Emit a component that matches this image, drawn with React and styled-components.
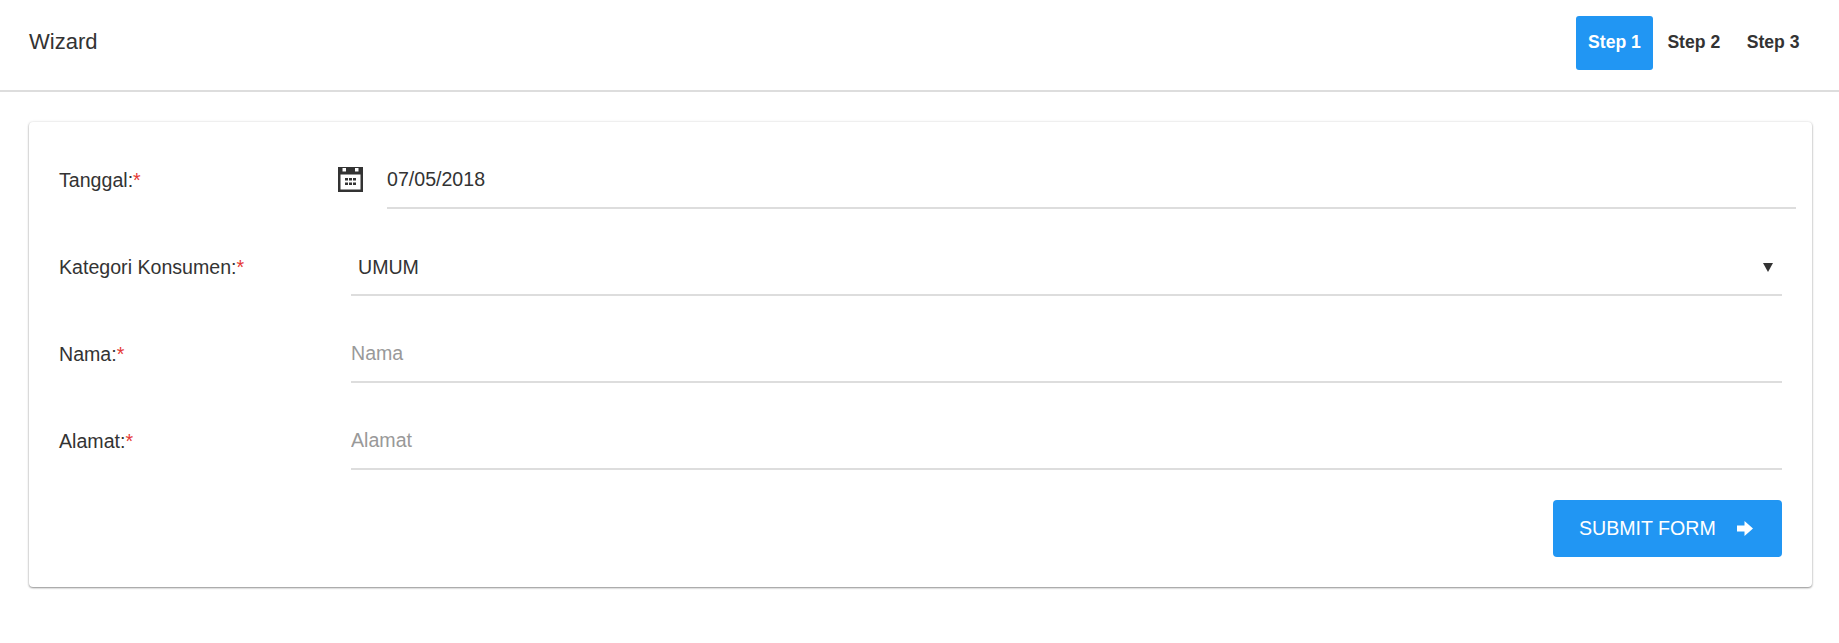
import React from "react";
import styled, { createGlobalStyle } from "styled-components";

const GlobalStyle = createGlobalStyle`
  html, body {
    margin: 0;
    padding: 0;
    background: #fff;
    color: #333;
    font-family: "Liberation Sans", Arial, sans-serif;
    font-size: 19.6px;
  }
  * { box-sizing: border-box; }
`;

const Page = styled.div`
  min-height: 643px;
  overflow: hidden;
`;

const Navbar = styled.header`
  display: flex;
  align-items: center;
  justify-content: space-between;
  height: 92px;
  padding: 0 27px 2px 29px;
  border-bottom: 2px solid #ddd;
`;

const Brand = styled.div`
  font-size: 22px;
  line-height: 24px;
  margin-top: -4px;
`;

const Steps = styled.nav`
  display: flex;
  gap: 1.5px;
  margin-top: -2px;
`;

const StepLink = styled.a`
  display: block;
  height: 54px;
  padding: 0 12.5px;
  line-height: 52px;
  border-radius: 3px;
  font-size: 17.6px;
  font-weight: 700;
  color: ${({ $active }) => ($active ? "#fff" : "#333")};
  background: ${({ $active }) => ($active ? "#2196f3" : "transparent")};
`;

const Card = styled.form`
  display: flex;
  flex-direction: column;
  gap: 30px;
  width: 1783px;
  margin: 30px 0 0 29px;
  padding: 30px;
  border-radius: 4px;
  background: #fff;
  box-shadow: 0 1px 2px rgba(0, 0, 0, 0.4), 0 0 3px rgba(0, 0, 0, 0.12);
`;

const Row = styled.div`
  display: grid;
  grid-template-columns: 292px 1fr;
  align-items: center;
  height: 57px;
`;

const Label = styled.label`
  font-size: 19.6px;
  line-height: 24px;
  margin-top: -2px;
`;

const Required = styled.span`
  color: #e53935;
`;

const DateField = styled.div`
  display: flex;
  align-items: center;
  gap: 24px;
  margin: 0 -14px 0 -13px;

  svg {
    flex: none;
    margin-top: -3px;
  }
`;

const TextInput = styled.input`
  flex: 1;
  display: block;
  width: 100%;
  height: 57px;
  padding: 0;
  border: 0;
  border-bottom: 2px solid #ddd;
  outline: none;
  background: transparent;
  color: #333;
  font: 19.6px "Liberation Sans", Arial, sans-serif;

  &::placeholder {
    color: #999;
    opacity: 1;
  }
`;

const SelectWrap = styled.div`
  position: relative;
`;

const Select = styled.select`
  appearance: none;
  display: block;
  width: 100%;
  height: 57px;
  padding: 0 0 0 7px;
  border: 0;
  border-bottom: 2px solid #ddd;
  border-radius: 0;
  outline: none;
  background: transparent;
  color: #333;
  font: 19.6px "Liberation Sans", Arial, sans-serif;
`;

const Caret = styled.span`
  position: absolute;
  top: 24px;
  right: 9px;
  width: 0;
  height: 0;
  border-left: 5px solid transparent;
  border-right: 5px solid transparent;
  border-top: 9px solid #333;
  pointer-events: none;
`;

const Actions = styled.div`
  display: flex;
  justify-content: flex-end;
`;

const SubmitButton = styled.button`
  display: flex;
  align-items: center;
  gap: 21px;
  width: 229px;
  height: 57px;
  padding: 0 0 0 26px;
  border: 0;
  border-radius: 4px;
  background: #2196f3;
  color: #fff;
  font: 19.6px "Liberation Sans", Arial, sans-serif;
`;

const CalendarIcon = () => (
  <svg width="25" height="25" viewBox="0 0 25 25" fill="#333" aria-hidden="true">
    <path
      fillRule="evenodd"
      d="M0 0h25v25H0zM4.500 1v3.500h3.500V1zM17 1v3.500h3.500V1zM2.500 7.500v15h20v-15z"
    />
    <path d="M7 11h3v2.500H7zM11 11h3v2.500h-3zM15 11h3v2.500h-3zM7 15.500h3V18H7zM11 15.500h3V18h-3zM15 15.500h3V18h-3z" />
  </svg>
);

const ArrowIcon = () => (
  <svg width="16" height="15" viewBox="0 0 16 15" fill="#fff" aria-hidden="true">
    <path d="M0 4.500h7.500V0L16 7.500 7.500 15v-4.500H0z" />
  </svg>
);

const Field = ({ label, children }) => (
  <Row>
    <Label>
      {label}:<Required>*</Required>
    </Label>
    {children}
  </Row>
);

const App = () => {
  return (
    <Page>
      <GlobalStyle />
      <Navbar>
        <Brand>Wizard</Brand>
        <Steps>
          <StepLink $active>Step 1</StepLink>
          <StepLink>Step 2</StepLink>
          <StepLink>Step 3</StepLink>
        </Steps>
      </Navbar>
      <Card onSubmit={(e) => e.preventDefault()}>
        <Field label="Tanggal">
          <DateField>
            <CalendarIcon />
            <TextInput defaultValue="07/05/2018" />
          </DateField>
        </Field>
        <Field label="Kategori Konsumen">
          <SelectWrap>
            <Select defaultValue="UMUM">
              <option>UMUM</option>
            </Select>
            <Caret />
          </SelectWrap>
        </Field>
        <Field label="Nama">
          <TextInput placeholder="Nama" />
        </Field>
        <Field label="Alamat">
          <TextInput placeholder="Alamat" />
        </Field>
        <Actions>
          <SubmitButton type="submit">
            SUBMIT FORM
            <ArrowIcon />
          </SubmitButton>
        </Actions>
      </Card>
    </Page>
  );
};

export default App;
